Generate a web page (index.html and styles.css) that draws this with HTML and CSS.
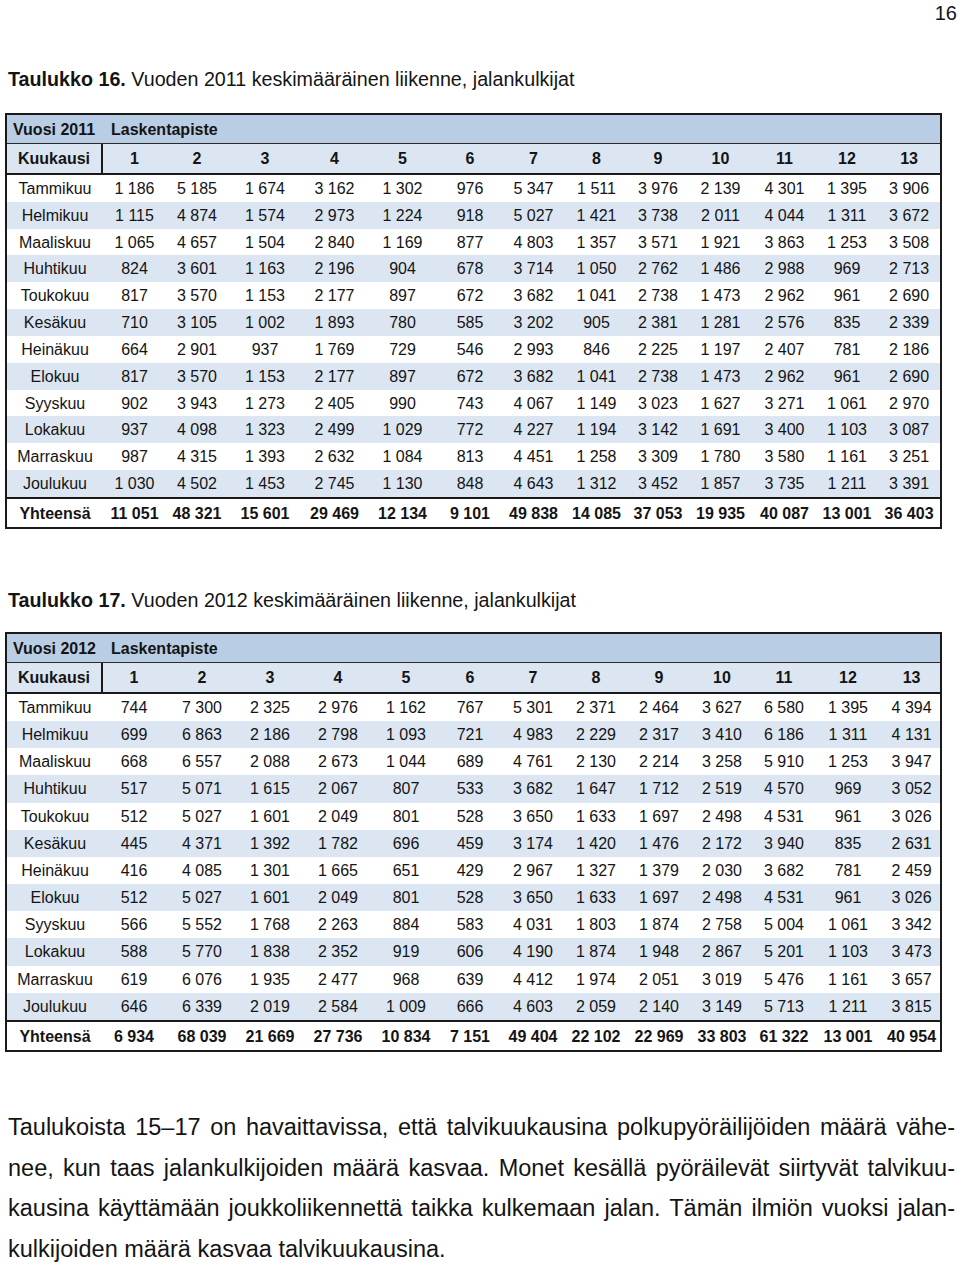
FILE: index.html
```html
<!DOCTYPE html>
<html lang="fi">
<head>
<meta charset="utf-8">
<title>Taulukot 16–17</title>
<link rel="stylesheet" href="styles.css">
</head>
<body>
<div class="page-num">16</div>

<h2 class="caption caption-1"><b>Taulukko 16.</b> Vuoden 2011 keskimääräinen liikenne, jalankulkijat</h2>
<table class="data t2011">
<colgroup>
<col class="c0"><col class="a1"><col class="a2"><col class="a3"><col class="a4"><col class="a5"><col class="a6"><col class="a7"><col class="a8"><col class="a9"><col class="a10"><col class="a11"><col class="a12"><col class="a13">
</colgroup>
<tr class="h1"><td class="year">Vuosi 2011</td><td class="lp" colspan="13">Laskentapiste</td></tr>
<tr class="h2"><td class="kk">Kuukausi</td><td>1</td><td>2</td><td>3</td><td>4</td><td>5</td><td>6</td><td>7</td><td>8</td><td>9</td><td>10</td><td>11</td><td>12</td><td>13</td></tr>
<tr><td>Tammikuu</td><td>1 186</td><td>5 185</td><td>1 674</td><td>3 162</td><td>1 302</td><td>976</td><td>5 347</td><td>1 511</td><td>3 976</td><td>2 139</td><td>4 301</td><td>1 395</td><td>3 906</td></tr>
<tr class="alt"><td>Helmikuu</td><td>1 115</td><td>4 874</td><td>1 574</td><td>2 973</td><td>1 224</td><td>918</td><td>5 027</td><td>1 421</td><td>3 738</td><td>2 011</td><td>4 044</td><td>1 311</td><td>3 672</td></tr>
<tr><td>Maaliskuu</td><td>1 065</td><td>4 657</td><td>1 504</td><td>2 840</td><td>1 169</td><td>877</td><td>4 803</td><td>1 357</td><td>3 571</td><td>1 921</td><td>3 863</td><td>1 253</td><td>3 508</td></tr>
<tr class="alt"><td>Huhtikuu</td><td>824</td><td>3 601</td><td>1 163</td><td>2 196</td><td>904</td><td>678</td><td>3 714</td><td>1 050</td><td>2 762</td><td>1 486</td><td>2 988</td><td>969</td><td>2 713</td></tr>
<tr><td>Toukokuu</td><td>817</td><td>3 570</td><td>1 153</td><td>2 177</td><td>897</td><td>672</td><td>3 682</td><td>1 041</td><td>2 738</td><td>1 473</td><td>2 962</td><td>961</td><td>2 690</td></tr>
<tr class="alt"><td>Kesäkuu</td><td>710</td><td>3 105</td><td>1 002</td><td>1 893</td><td>780</td><td>585</td><td>3 202</td><td>905</td><td>2 381</td><td>1 281</td><td>2 576</td><td>835</td><td>2 339</td></tr>
<tr><td>Heinäkuu</td><td>664</td><td>2 901</td><td>937</td><td>1 769</td><td>729</td><td>546</td><td>2 993</td><td>846</td><td>2 225</td><td>1 197</td><td>2 407</td><td>781</td><td>2 186</td></tr>
<tr class="alt"><td>Elokuu</td><td>817</td><td>3 570</td><td>1 153</td><td>2 177</td><td>897</td><td>672</td><td>3 682</td><td>1 041</td><td>2 738</td><td>1 473</td><td>2 962</td><td>961</td><td>2 690</td></tr>
<tr><td>Syyskuu</td><td>902</td><td>3 943</td><td>1 273</td><td>2 405</td><td>990</td><td>743</td><td>4 067</td><td>1 149</td><td>3 023</td><td>1 627</td><td>3 271</td><td>1 061</td><td>2 970</td></tr>
<tr class="alt"><td>Lokakuu</td><td>937</td><td>4 098</td><td>1 323</td><td>2 499</td><td>1 029</td><td>772</td><td>4 227</td><td>1 194</td><td>3 142</td><td>1 691</td><td>3 400</td><td>1 103</td><td>3 087</td></tr>
<tr><td>Marraskuu</td><td>987</td><td>4 315</td><td>1 393</td><td>2 632</td><td>1 084</td><td>813</td><td>4 451</td><td>1 258</td><td>3 309</td><td>1 780</td><td>3 580</td><td>1 161</td><td>3 251</td></tr>
<tr class="alt"><td>Joulukuu</td><td>1 030</td><td>4 502</td><td>1 453</td><td>2 745</td><td>1 130</td><td>848</td><td>4 643</td><td>1 312</td><td>3 452</td><td>1 857</td><td>3 735</td><td>1 211</td><td>3 391</td></tr>
<tr class="total"><td>Yhteensä</td><td>11 051</td><td>48 321</td><td>15 601</td><td>29 469</td><td>12 134</td><td>9 101</td><td>49 838</td><td>14 085</td><td>37 053</td><td>19 935</td><td>40 087</td><td>13 001</td><td>36 403</td></tr>
</table>

<h2 class="caption caption-2"><b>Taulukko 17.</b> Vuoden 2012 keskimääräinen liikenne, jalankulkijat</h2>
<table class="data t2012">
<colgroup>
<col class="c0"><col class="b1"><col class="b2"><col class="b3"><col class="b4"><col class="b5"><col class="b6"><col class="b7"><col class="b8"><col class="b9"><col class="b10"><col class="b11"><col class="b12"><col class="b13">
</colgroup>
<tr class="h1"><td class="year">Vuosi 2012</td><td class="lp" colspan="13">Laskentapiste</td></tr>
<tr class="h2"><td class="kk">Kuukausi</td><td>1</td><td>2</td><td>3</td><td>4</td><td>5</td><td>6</td><td>7</td><td>8</td><td>9</td><td>10</td><td>11</td><td>12</td><td>13</td></tr>
<tr><td>Tammikuu</td><td>744</td><td>7 300</td><td>2 325</td><td>2 976</td><td>1 162</td><td>767</td><td>5 301</td><td>2 371</td><td>2 464</td><td>3 627</td><td>6 580</td><td>1 395</td><td>4 394</td></tr>
<tr class="alt"><td>Helmikuu</td><td>699</td><td>6 863</td><td>2 186</td><td>2 798</td><td>1 093</td><td>721</td><td>4 983</td><td>2 229</td><td>2 317</td><td>3 410</td><td>6 186</td><td>1 311</td><td>4 131</td></tr>
<tr><td>Maaliskuu</td><td>668</td><td>6 557</td><td>2 088</td><td>2 673</td><td>1 044</td><td>689</td><td>4 761</td><td>2 130</td><td>2 214</td><td>3 258</td><td>5 910</td><td>1 253</td><td>3 947</td></tr>
<tr class="alt"><td>Huhtikuu</td><td>517</td><td>5 071</td><td>1 615</td><td>2 067</td><td>807</td><td>533</td><td>3 682</td><td>1 647</td><td>1 712</td><td>2 519</td><td>4 570</td><td>969</td><td>3 052</td></tr>
<tr><td>Toukokuu</td><td>512</td><td>5 027</td><td>1 601</td><td>2 049</td><td>801</td><td>528</td><td>3 650</td><td>1 633</td><td>1 697</td><td>2 498</td><td>4 531</td><td>961</td><td>3 026</td></tr>
<tr class="alt"><td>Kesäkuu</td><td>445</td><td>4 371</td><td>1 392</td><td>1 782</td><td>696</td><td>459</td><td>3 174</td><td>1 420</td><td>1 476</td><td>2 172</td><td>3 940</td><td>835</td><td>2 631</td></tr>
<tr><td>Heinäkuu</td><td>416</td><td>4 085</td><td>1 301</td><td>1 665</td><td>651</td><td>429</td><td>2 967</td><td>1 327</td><td>1 379</td><td>2 030</td><td>3 682</td><td>781</td><td>2 459</td></tr>
<tr class="alt"><td>Elokuu</td><td>512</td><td>5 027</td><td>1 601</td><td>2 049</td><td>801</td><td>528</td><td>3 650</td><td>1 633</td><td>1 697</td><td>2 498</td><td>4 531</td><td>961</td><td>3 026</td></tr>
<tr><td>Syyskuu</td><td>566</td><td>5 552</td><td>1 768</td><td>2 263</td><td>884</td><td>583</td><td>4 031</td><td>1 803</td><td>1 874</td><td>2 758</td><td>5 004</td><td>1 061</td><td>3 342</td></tr>
<tr class="alt"><td>Lokakuu</td><td>588</td><td>5 770</td><td>1 838</td><td>2 352</td><td>919</td><td>606</td><td>4 190</td><td>1 874</td><td>1 948</td><td>2 867</td><td>5 201</td><td>1 103</td><td>3 473</td></tr>
<tr><td>Marraskuu</td><td>619</td><td>6 076</td><td>1 935</td><td>2 477</td><td>968</td><td>639</td><td>4 412</td><td>1 974</td><td>2 051</td><td>3 019</td><td>5 476</td><td>1 161</td><td>3 657</td></tr>
<tr class="alt"><td>Joulukuu</td><td>646</td><td>6 339</td><td>2 019</td><td>2 584</td><td>1 009</td><td>666</td><td>4 603</td><td>2 059</td><td>2 140</td><td>3 149</td><td>5 713</td><td>1 211</td><td>3 815</td></tr>
<tr class="total"><td>Yhteensä</td><td>6 934</td><td>68 039</td><td>21 669</td><td>27 736</td><td>10 834</td><td>7 151</td><td>49 404</td><td>22 102</td><td>22 969</td><td>33 803</td><td>61 322</td><td>13 001</td><td>40 954</td></tr>
</table>

<p class="body-text">
<span class="jl">Taulukoista 15–17 on havaittavissa, että talvikuukausina polkupyöräilijöiden määrä vähe-</span>
<span class="jl">nee, kun taas jalankulkijoiden määrä kasvaa. Monet kesällä pyöräilevät siirtyvät talvikuu-</span>
<span class="jl">kausina käyttämään joukkoliikennettä taikka kulkemaan jalan. Tämän ilmiön vuoksi jalan-</span>
<span class="ll">kulkijoiden määrä kasvaa talvikuukausina.</span>
</p>
</body>
</html>
```

FILE: styles.css
```css
html, body {
  margin: 0;
  padding: 0;
  background: #ffffff;
}

body {
  font-family: "Liberation Sans", Arial, Helvetica, sans-serif;
  color: #141414;
  width: 960px;
}

.page-num {
  font-size: 20px;
  line-height: 24px;
  padding-top: 1px;
  text-align: right;
  padding-right: 3px;
}

.caption {
  font-size: 19.7px;
  line-height: 24px;
  font-weight: normal;
  margin: 0 0 0 8px;
}

.caption b {
  font-weight: bold;
}

.caption-1 {
  margin-top: 42px;
  margin-bottom: 22px;
}

.caption-2 {
  margin-top: 59px;
  margin-bottom: 20px;
}

.data {
  margin-left: 5px;
  width: 937px;
  table-layout: fixed;
  border-collapse: separate;
  border-spacing: 0;
  border: 2px solid #1a1a1a;
  font-size: 16px;
  white-space: nowrap;
}

.data td {
  padding: 1px 0 0;
  text-align: center;
  vertical-align: middle;
  overflow: visible;
}

.t2011 td {
  line-height: 25.83px;
}

.t2012 td {
  line-height: 26.17px;
}

.data .h1 td {
  background: #b9cde5;
  line-height: 27px;
  font-weight: bold;
  text-align: left;
  border-bottom: 1px solid #2a2a2a;
}

.data .h1 .year {
  padding-left: 6px;
}

.data .h1 .lp {
  padding-left: 8px;
}

.data .h2 td {
  background: #dce6f2;
  line-height: 28px;
  font-weight: bold;
  border-bottom: 2px solid #1a1a1a;
}

.data .h2 .kk {
  border-right: 2px solid #1a1a1a;
}

.data .alt td {
  background: #dce6f2;
}

.data .total td {
  line-height: 27px;
  font-weight: bold;
  border-top: 2px solid #1a1a1a;
}

.c0 { width: 96px; }

.a1 { width: 63px; }
.a2 { width: 62px; }
.a3 { width: 74px; }
.a4 { width: 65px; }
.a5 { width: 71px; }
.a6 { width: 64px; }
.a7 { width: 63px; }
.a8 { width: 63px; }
.a9 { width: 60px; }
.a10 { width: 65px; }
.a11 { width: 63px; }
.a12 { width: 62px; }
.a13 { width: 62px; }

.b1 { width: 62px; }
.b2 { width: 74px; }
.b3 { width: 62px; }
.b4 { width: 74px; }
.b5 { width: 62px; }
.b6 { width: 66px; }
.b7 { width: 60px; }
.b8 { width: 66px; }
.b9 { width: 60px; }
.b10 { width: 66px; }
.b11 { width: 58px; }
.b12 { width: 70px; }
.b13 { width: 57px; }

.body-text {
  margin: 55px 0 0 8px;
  width: 947px;
  font-size: 23.5px;
  line-height: 40.7px;
}

.body-text .jl {
  display: block;
  text-align: justify;
  text-align-last: justify;
  white-space: nowrap;
}

.body-text .ll {
  display: block;
  text-align: left;
}
```
